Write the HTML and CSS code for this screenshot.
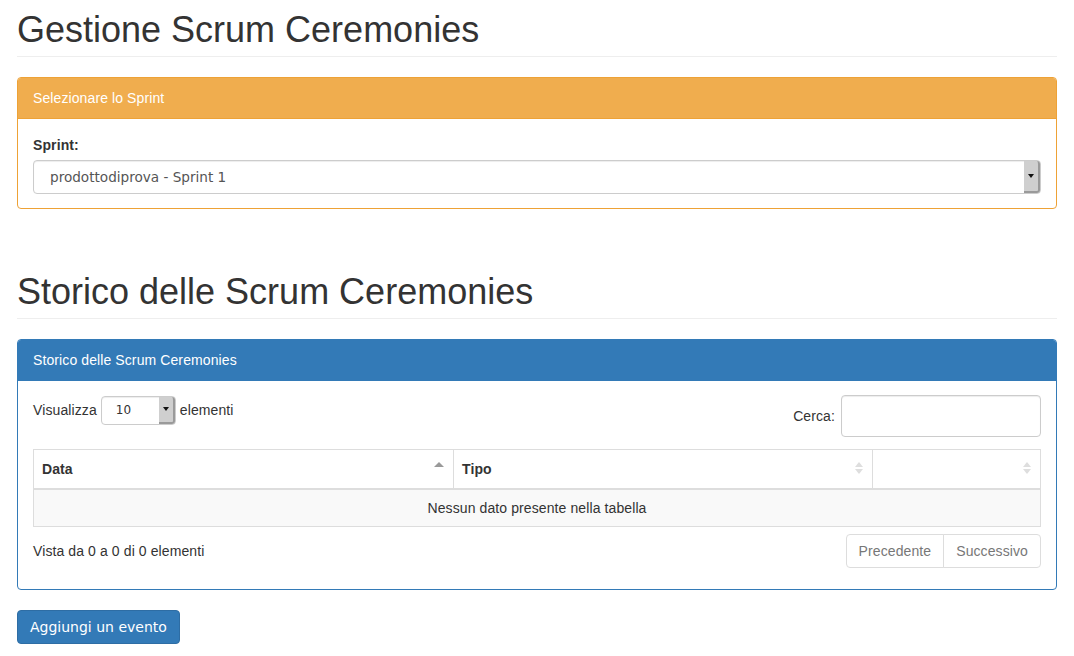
FILE: index.html
```html
<!DOCTYPE html>
<html lang="it">
<head>
<meta charset="utf-8">
<title>Gestione Scrum Ceremonies</title>
<link rel="stylesheet" href="styles.css">
</head>
<body>
<div class="container">
  <div class="page-header first"><h1>Gestione Scrum Ceremonies</h1></div>

  <div class="panel panel-orange">
    <div class="panel-heading">Selezionare lo Sprint</div>
    <div class="panel-body">
      <label class="field-label">Sprint:</label>
      <div class="select big">
        <span class="select-text">prodottodiprova - Sprint 1</span>
        <span class="select-btn"><span class="caret"></span></span>
      </div>
    </div>
  </div>

  <div class="page-header second"><h1>Storico delle Scrum Ceremonies</h1></div>

  <div class="panel panel-blue">
    <div class="panel-heading">Storico delle Scrum Ceremonies</div>
    <div class="panel-body">
      <div class="dt-top">
        <div class="dt-length">
          <span>Visualizza</span>
          <div class="select small">
            <span class="select-text">10</span>
            <span class="select-btn"><span class="caret"></span></span>
          </div>
          <span>elementi</span>
        </div>
        <div class="dt-filter">
          <span>Cerca:</span>
          <div class="search-input"></div>
        </div>
      </div>
      <table class="table">
        <thead>
          <tr>
            <th class="c1">Data<span class="sort-asc"></span></th>
            <th class="c2">Tipo<span class="sort-both"><i class="up"></i><i class="down"></i></span></th>
            <th class="c3"><span class="sort-both"><i class="up"></i><i class="down"></i></span></th>
          </tr>
        </thead>
        <tbody>
          <tr><td colspan="3" class="empty">Nessun dato presente nella tabella</td></tr>
        </tbody>
      </table>
      <div class="dt-bottom">
        <div class="dt-info">Vista da 0 a 0 di 0 elementi</div>
        <div class="pagination">
          <span class="page-btn first-btn">Precedente</span>
          <span class="page-btn last-btn">Successivo</span>
        </div>
      </div>
    </div>
  </div>

  <div class="btn-primary">Aggiungi un evento</div>
</div>
</body>
</html>
```

FILE: styles.css
```css
* { box-sizing: border-box; }
html, body { margin: 0; padding: 0; background: #fff; }
body {
  font-family: "Liberation Sans", Arial, sans-serif;
  font-size: 14px;
  line-height: 20px;
  letter-spacing: 0.1px;
  color: #333;
}
.container { padding: 0 17px; }

.page-header {
  border-bottom: 1px solid #eee;
  padding: 10px 0 6px;
  margin: 0 0 20px;
}
.page-header.second { margin-top: 53px; }
.page-header h1 {
  margin: 0;
  font-size: 36px;
  font-weight: 500;
  line-height: 40px;
  letter-spacing: 0;
  color: #333;
}

.panel {
  border: 1px solid #ddd;
  border-radius: 4px;
  margin-bottom: 20px;
  background: #fff;
}
.panel-heading {
  padding: 10px 15px;
  border-bottom: 1px solid transparent;
  border-radius: 3px 3px 0 0;
  color: #fff;
  font-size: 14px;
}
.panel-orange { border-color: #eea236; }
.panel-orange .panel-heading { background: #f0ad4e; border-color: #eea236; }
.panel-blue { border-color: #337ab7; }
.panel-blue .panel-heading { background: #337ab7; border-color: #337ab7; }
.panel-body { padding: 15px; }
.panel-orange .panel-body { padding: 16px 15px 14px; }

.field-label {
  display: block;
  font-weight: bold;
  margin-bottom: 5px;
}

.select {
  display: flex;
  align-items: stretch;
  border: 1px solid #ccc;
  border-radius: 4px;
  background: #fff;
  box-shadow: inset 0 1px 1px rgba(0,0,0,.075);
  font-family: "DejaVu Sans", sans-serif;
  letter-spacing: 0;
  color: #555;
}
.select .select-text { flex: 1; display: flex; align-items: center; }
.select.big { height: 34px; font-size: 13.6px; }
.select.big .select-text { padding-left: 16px; }
.select.small {
  height: 29px;
  width: 75px;
  font-size: 12px;
  margin: 0 4px 0 4px;
}
.select.small .select-text { padding-left: 14px; color: #333; }
.select-btn {
  width: 16px;
  background: #cfcfcf;
  border-right: 2px solid #9a9a9a;
  border-bottom: 2px solid #9a9a9a;
  border-radius: 0 3px 3px 0;
  display: flex;
  align-items: center;
  justify-content: center;
}
.caret {
  width: 0; height: 0;
  border-left: 3px solid transparent;
  border-right: 3px solid transparent;
  border-top: 4px solid #111;
}

.dt-top {
  display: flex;
  justify-content: space-between;
  align-items: flex-start;
  margin-top: -1px;
}
.dt-length { display: flex; align-items: center; height: 30px; }
.dt-filter { display: flex; align-items: center; }
.search-input {
  width: 200px;
  height: 42px;
  border: 1px solid #ccc;
  border-radius: 4px;
  margin-left: 6px;
  box-shadow: inset 0 1px 1px rgba(0,0,0,.075);
}

.table {
  width: 100%;
  border-collapse: collapse;
  margin-top: 12px;
  border: 1px solid #ddd;
}
.table th {
  text-align: left;
  font-weight: bold;
  padding: 8px 8px;
  border: 1px solid #ddd;
  border-bottom: 2px solid #ddd;
  position: relative;
  line-height: 20px;
  height: 39px;
}
.table th.c1 { width: 420px; }
.table th.c2 { width: 419px; }
.table td.empty {
  text-align: center;
  background: #f9f9f9;
  padding: 8px;
  border: 1px solid #ddd;
  line-height: 20px;
}
.sort-asc {
  position: absolute;
  right: 9px;
  top: 12px;
  width: 0; height: 0;
  border-left: 5px solid transparent;
  border-right: 5px solid transparent;
  border-bottom: 5px solid #999;
}
.sort-both {
  position: absolute;
  right: 9px;
  top: 12px;
  display: flex;
  flex-direction: column;
  gap: 2px;
}
.sort-both i {
  display: block;
  width: 0; height: 0;
  border-left: 4px solid transparent;
  border-right: 4px solid transparent;
}
.sort-both .up { border-bottom: 5px solid #dedede; }
.sort-both .down { border-top: 5px solid #dedede; }

.dt-bottom {
  display: flex;
  justify-content: space-between;
  align-items: center;
  margin-top: 7px;
  padding-bottom: 6px;
}
.pagination { display: flex; }
.page-btn {
  display: block;
  padding: 6px 12px;
  line-height: 20px;
  border: 1px solid #ddd;
  color: #777;
  background: #fff;
}
.page-btn.first-btn { border-radius: 4px 0 0 4px; }
.page-btn.last-btn { border-radius: 0 4px 4px 0; margin-left: -1px; }

.btn-primary {
  display: inline-block;
  background: #337ab7;
  border: 1px solid #2e6da4;
  border-radius: 4px;
  color: #fff;
  font-family: "DejaVu Sans", sans-serif;
  letter-spacing: 0;
  font-size: 14px;
  line-height: 20px;
  padding: 6px 12px;
}
```
